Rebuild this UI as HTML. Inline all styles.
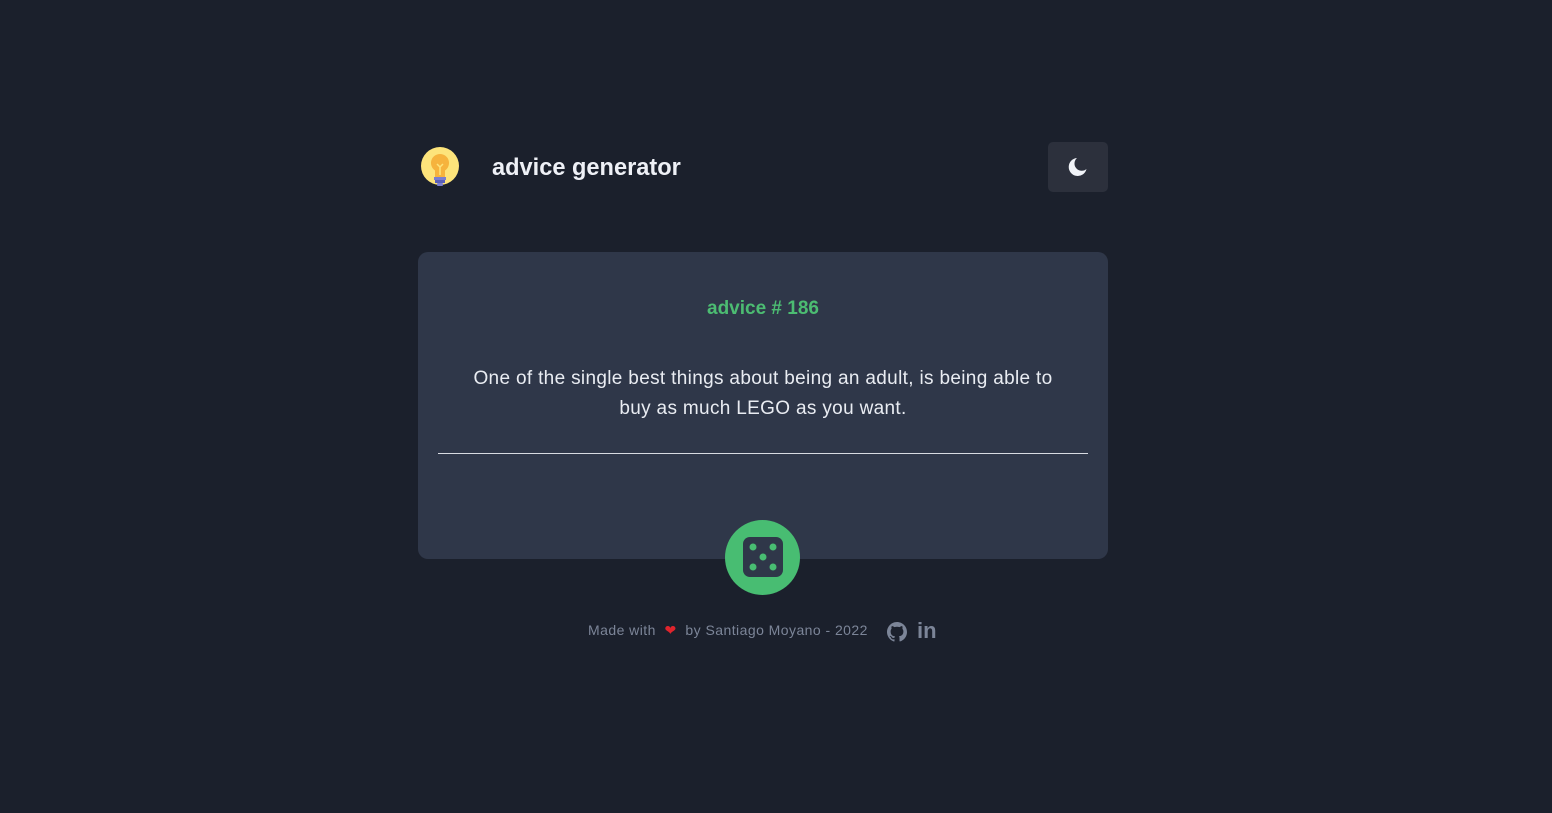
<!DOCTYPE html>
<html><head><meta charset="utf-8"><style>
body{margin:0;background:#1b202c;width:1552px;height:813px;font-family:"Liberation Sans",sans-serif;position:relative;overflow:hidden}
.t{position:absolute;left:492px;top:155px;font-size:23.6px;font-weight:bold;color:#eef0f6}
.btn{position:absolute;left:1048px;top:142px;width:60px;height:50px;border-radius:5px;background:#2c303c}
.card{position:absolute;left:418px;top:252px;width:690px;height:307px;border-radius:10px;background:#2f3749}
.num{position:absolute;left:0;width:690px;top:46px;text-align:center;color:#4cbc72;font-weight:bold;font-size:19px}
.q{position:absolute;left:45px;width:600px;top:112px;text-align:center;color:#e9ecf2;font-size:19px;letter-spacing:0.33px;line-height:30px}
.hr{position:absolute;left:20px;width:650px;top:201px;height:1px;background:#d8dbe2}
.dice{position:absolute;left:725px;top:520px;width:75px;height:75px;border-radius:50%;background:#48bd72}
.f{position:absolute;left:588px;top:622px;font-size:14px;letter-spacing:0.45px;color:#7c8598}
</style></head><body>
<svg style="position:absolute;left:420px;top:146px" width="40" height="44" viewBox="0 0 40 44">
<circle cx="20" cy="20" r="19" fill="#fde47b"/>
<path d="M20 8a9 9 0 0 0-5 16.5V31h10v-6.5A9 9 0 0 0 20 8z" fill="#f6b33d"/>
<path d="M17 18l3 3 3-3M20 21v8" stroke="#fde47b" stroke-width="1.5" fill="none"/>
<rect x="14" y="31" width="12" height="3" fill="#7a7fd0"/><rect x="15" y="34" width="10" height="3" fill="#5a5fb8"/><rect x="17" y="37" width="6" height="3" rx="1" fill="#7a7fd0"/>
</svg>
<div class="t">advice generator</div>
<div class="btn"><svg style="position:absolute;left:19px;top:14px" width="22" height="22" viewBox="0 0 22 22"><path d="M10 2a9 9 0 1 0 9.5 11A7 7 0 0 1 10 2z" fill="#f1f3f8"/></svg></div>
<div class="card"><div class="num">advice # 186</div>
<div class="q">One of the single best things about being an adult, is being able to buy as much LEGO as you want.</div>
<div class="hr"></div></div>
<div class="dice"><svg style="position:absolute;left:18px;top:17px" width="40" height="40" viewBox="0 0 40 40"><rect x="0" y="0" width="40" height="40" rx="7" fill="#2f3749"/><g fill="#48bd72"><circle cx="10" cy="10" r="3.5"/><circle cx="30" cy="10" r="3.5"/><circle cx="20" cy="20" r="3.5"/><circle cx="10" cy="30" r="3.5"/><circle cx="30" cy="30" r="3.5"/></g></svg></div>
<div class="f">Made with &nbsp;<span style="color:#e0242c">❤</span>&nbsp; by Santiago Moyano - 2022</div>
<svg style="position:absolute;left:887px;top:622px" width="20" height="20" viewBox="0 0 16 16"><path fill="#7c8598" d="M8 0C3.6 0 0 3.6 0 8c0 3.5 2.3 6.5 5.5 7.6.4.1.5-.2.5-.4v-1.4c-2.2.5-2.7-1-2.7-1-.4-.9-.9-1.2-.9-1.2-.7-.5.1-.5.1-.5.8.1 1.2.8 1.2.8.7 1.2 1.9.9 2.3.7.1-.5.3-.9.5-1.1-1.8-.2-3.6-.9-3.6-4 0-.9.3-1.6.8-2.1-.1-.2-.4-1 .1-2.1 0 0 .7-.2 2.2.8.6-.2 1.3-.3 2-.3s1.4.1 2 .3c1.5-1 2.2-.8 2.2-.8.4 1.1.2 1.9.1 2.1.5.6.8 1.3.8 2.1 0 3.1-1.9 3.7-3.6 3.9.3.3.5.8.5 1.5v2.2c0 .2.1.5.6.4C13.7 14.5 16 11.5 16 8c0-4.4-3.6-8-8-8z"/></svg>
<div style="position:absolute;left:917px;top:618px;font-size:22px;font-weight:bold;color:#7c8598">in</div>
</body></html>
